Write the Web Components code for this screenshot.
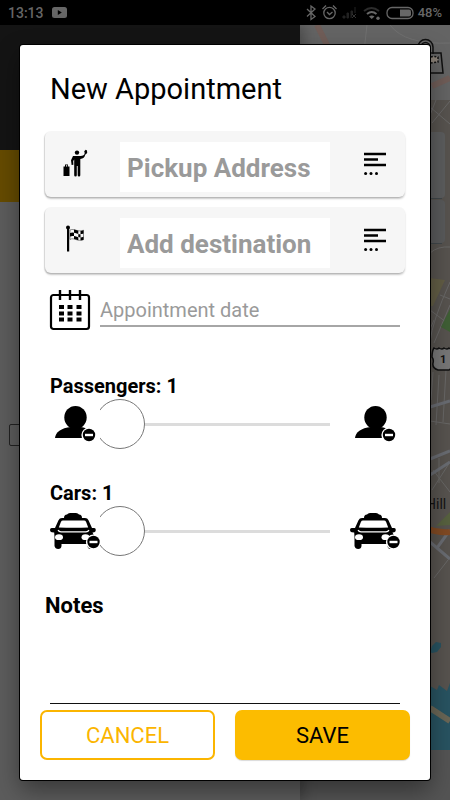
<!DOCTYPE html>
<html lang="en">
<head>
<meta charset="utf-8">
<meta name="viewport" content="width=device-width, initial-scale=1">
<title>New Appointment</title>
<style>
  html, body { margin: 0; height: 100%; }
  body { font-family: Roboto, "Liberation Sans", sans-serif; background: #545454; color: #000; }
</style>
</head>
<body>
<app-screen>
  <status-bar slot="status"></status-bar>
  <side-drawer slot="drawer"></side-drawer>
  <city-map slot="map"></city-map>
  <appointment-dialog slot="dialog" heading="New Appointment">
    <div slot="places">
      <address-card icon="hail" hint="Pickup Address"></address-card>
      <address-card icon="flag" hint="Add destination"></address-card>
    </div>
    <date-field hint="Appointment date"></date-field>
    <count-slider label="Passengers" icon="person"></count-slider>
    <count-slider label="Cars" icon="taxi"></count-slider>
    <notes-field label="Notes"></notes-field>
    <action-button slot="actions" kind="outline">CANCEL</action-button>
    <action-button slot="actions" kind="solid">SAVE</action-button>
  </appointment-dialog>
</app-screen>

<script>
const define = (name, render, setup) => customElements.define(name, class extends HTMLElement {
  constructor() { super(); this.attachShadow({ mode: 'open' }); }
  connectedCallback() {
    const t = document.createElement('template');
    t.innerHTML = render(this);
    this.shadowRoot.replaceChildren(t.content.cloneNode(true));
    if (setup) setup(this.shadowRoot, this);
  }
});

const minus = (x, y) => `<circle cx="${x}" cy="${y}" r="7.6" fill="#fff"/><circle cx="${x}" cy="${y}" r="6.2"/><path d="M${x - 4} ${y}h8" stroke="#fff" stroke-width="2.4"/>`;
const dot = (x, y) => `<rect x="${x}" y="${y}" width="5" height="4"/>`;

const icons = {
  hail: [24, 28, `<circle cx="14" cy="3.600" r="2.200"/>
    <path d="M10 7h7.500c2.500 0 4-.8 4.200-3l-.5-1.800L22.700.800 24 1.600l.2 2.400-2 1.700c-.5 2.500-2 4-4.900 4.300v16.200q0 1.300-1.300 1.300t-1.300-1.300V17h-.9v9.200q0 1.300-1.300 1.300t-1.300-1.300V10.500l-1 1.500.2 3.800-1.800.3-.6-4.900z"/>
    <path d="M.500 17.500H2v-2h3v2h1.500V27h-6zM3 17.500h1.200v-1.300H3z" fill-rule="evenodd"/>`],
  flag: [24, 28, `<circle cx="5" cy="2.500" r="2"/><rect x="4" y="3" width="2.200" height="23.500"/>
    <path d="M7 5c4-2 7 2.500 13.500.2v9.500C14 17 11 12 7 14.500z" fill="none" stroke="#444" stroke-width=".6"/>
    <path d="M11 4.600q2 .3 4.300 1.200v3.200Q13 8 11 7.700zM17.500 6q1.500 0 3-.7v3.200q-1.500.6-3 .6zM7 8q2-.8 4-.3v3.400q-2-.5-4 .3zM15.300 9q1 .3 2.200.2v3.200l-2.200-.3zM11 11.100q2 .4 4.300 1.200v3Q13 14.500 11 14zM17.500 12.400q1.500 0 3-.7v3q-1.500.6-3 .6z"/>`],
  lines: [24, 24, `<path d="M1 2h22M1 7.500h14M1 13h22" stroke="#000" stroke-width="2.600"/>
    <circle cx="2.600" cy="21.500" r="1.500"/><circle cx="8" cy="21.500" r="1.500"/><circle cx="13.500" cy="21.500" r="1.500"/>`],
  calendar: [40, 40, `<rect x="1" y="5" width="38" height="34" rx="2.500" fill="none" stroke="#000" stroke-width="2.200"/>
    <path d="M10 0v10M20 0v10M30 0v10" stroke="#000" stroke-width="2.400"/>
    ${[15, 21.5, 27.5].map(y => dot(9, y) + dot(17.5, y) + dot(26.500, y)).join('')}`],
  person: [50, 50, `<ellipse cx="25.500" cy="18.500" rx="11.200" ry="11.500"/>
    <path d="M5 39c.5-5.500 6-10 16-11h9c6 .6 11 3.500 13 8v3z"/>${minus(39, 36)}`],
  taxi: [50, 50, `<path d="M14 12q0-3 3-3.400 1-1.600 3-1.600h6q2 0 3 1.600 3 .4 3 3.400z"/>
    <path d="M12 12h23q2.500 0 3.500 2.200L42 22h2.200q1.600.2 1.600 2t-1.600 2.200l-1.700.2q1.500 2 1.500 5V40q-.5 3-3.400 3t-3.100-3v-2h-26v2q-.3 3-3.300 3T4.500 40V31l-.3-4.500-2.500-.3Q0 26 0 24t1.700-2H5l3.500-7.800Q9.500 12 12 12z"/>
    <path d="M13 14.500h21q1.500 0 2 1.200l2.200 5.800q-14 .6-29.400 0L11 15.700q.5-1.200 2-1.200z" fill="#fff"/>
    <path d="M8 24.200q1 1.600 3 1.600h25q2 0 3-1.600" fill="none" stroke="#fff" stroke-width="1.300"/>
    <ellipse cx="9" cy="31.200" rx="4" ry="2.900" fill="#fff"/><ellipse cx="35.500" cy="31.200" rx="4" ry="2.900" fill="#fff"/>${minus(43.5, 36)}`],
};

define('ui-icon', el => {
  const [w, h, body] = icons[el.getAttribute('name')];
  return `<style>:host{display:block;flex:none} svg{display:block;overflow:visible}</style>
    <svg width="${w}" height="${h}" viewBox="0 0 ${w} ${h}" aria-hidden="true">${body}</svg>`;
});

define('app-screen', () => `<style>
  :host { display: grid; grid-template: auto minmax(0, 1fr) / 2fr 1fr; min-height: 100vh; }
  slot { display: grid; min-width: 0; }
  slot[name=status] { grid-area: 1 / 1 / 2 / 3; }
  slot[name=drawer] { grid-area: 2 / 1; }
  slot[name=map] { grid-area: 2 / 2; }
  slot[name=dialog] { grid-area: 2 / 1 / 3 / 3; padding: 20px; z-index: 1; }
</style>
<slot name="status"></slot><slot name="map"></slot><slot name="drawer"></slot><slot name="dialog"></slot>`);

define('status-bar', () => `<style>
  :host { display: flex; align-items: center; justify-content: space-between; height: 25px; padding: 0 8px; background: #000; color: #676767; font-weight: 500; }
  div { display: flex; align-items: center; }
  .left { gap: 8px; font-size: 14px; }
  .right { gap: 4px; font-size: 13px; }
  svg { display: block; }
</style>
<div class="left"><span>13:13</span>
  <svg width="15" height="11" viewBox="0 0 15 11"><rect width="15" height="11" rx="2.500" fill="#676767"/><path d="M5.800 3v5l4-2.500z" fill="#000"/></svg></div>
<div class="right">
  <svg width="108" height="18" viewBox="307 4 108 18" fill="none" stroke="#676767">
    <path d="M308 9l8 7.500-4 3V6l4 3-8 7.500" stroke-width="1.300"/>
    <circle cx="330.500" cy="13" r="5.700" stroke-width="1.300"/><path d="M323.500 9l3.500-3.500M337.500 9L334 5.500M328 12l2.500 2.500 3-2.500" stroke-width="1.300"/>
    <path d="M344 18v-2h2v2zM348 18v-5h1.500v5zM352 18v-7h1.500v4M356 13V7" fill="#222" stroke="#222"/><path d="M353 14l4 4M357 14l-4 4" stroke="#333"/>
    <path d="M365 11q7.500-6 15 0" stroke="#2c2c2c" stroke-width="2"/><path d="M368 14q4.700-4 9.500 0" stroke-width="2"/><path d="M370 16.500q2.700-2 5.500 0L372.700 19z" fill="#676767" stroke="none"/><circle cx="379" cy="18.300" r="1.700" fill="#676767" stroke="none"/>
    <rect x="388" y="7.500" width="26" height="11" rx="5" stroke-width="1.300"/><path d="M401 9.500h9q2 0 2 2v3q0 2-2 2h-9z" fill="#676767" stroke="none"/>
  </svg><span>48%</span>
</div>`);

define('side-drawer', () => `<style>
  :host { display: flex; flex-direction: column; background: #5c5c5c; box-shadow: 4px 0 12px rgba(0,0,0,.25); }
  .head { height: 125px; background: #141414; }
  .band { height: 52px; background: #654b00; }
  .item { margin: 222px 0 0 9px; width: 20px; height: 20px; border: 1px solid #222; border-radius: 2px; }
</style><div class="head"></div><div class="band"></div><div class="item"></div>`);

define('city-map', () => `<style>
  :host { display: block; background: #545454; min-width: 0; overflow: hidden; }
  svg { display: block; width: 100%; height: 100%; }
</style>
<svg viewBox="300 25 150 775" preserveAspectRatio="xMaxYMin slice" aria-label="Map">
  <rect x="300" y="25" width="150" height="725" fill="#57534f"/>
  <rect x="300" y="25" width="150" height="75" fill="#646464"/>
  <path d="M317 25l14 28M432 86l18-8" stroke="#705d58" stroke-width="6"/>
  <path d="M367 25l-4 35M390 25q15 20 60 18" stroke="#707070" fill="none"/>
  <g fill="none" stroke="#101010" stroke-width="1.500"><path d="M418 47a7.500 7.500 0 0 1 15 0v7M421 47a4.500 4.500 0 0 1 9 0M430 53h11l2 20h-14"/><path d="M431 57q2-1 7 0v5l-8 1" stroke-dasharray="2 1.500" fill="#8b8278"/></g>
  <g stroke="#696867" fill="none" stroke-width="1">
    <path d="M430 107l20 17M436 100l-8 20M450 101l-18 22M430 253q8-7 20-6M450 282q-18 40-20 60M430 310l20 15M434 320l-4 9M440 295l10 4M450 305l-16 38M433 372l-2 28M439 375l-3 50M446 370l-3 52M430 421l20 3M433 470l17 22M432 490l18-28M439 458v25M448 560l-14 18"/>
  </g>
  <rect x="425" y="132" width="20" height="66" rx="4" fill="#5c5d5e"/><rect x="425" y="200" width="20" height="43" rx="4" fill="#595a5b"/>
  <path d="M430 198.500h12M430 243.500h12" stroke="#40474a"/>
  <path d="M430 278l15 2-12 26h-3z" fill="#625d45"/><path d="M450 309l-9 18 9 5z" fill="#3f5f35"/><path d="M436 526l14-14v13z" fill="#57613f"/>
  <path d="M430 407l20-6M430 459l20-8M430 475l20-13M430 542l20 17M437 548l13-18" stroke="#696c72" stroke-width="3"/>
  <path d="M428 529q10 4 22 3" stroke="#814a23" stroke-width="6" fill="none"/>
  <path d="M434 348q3 2 5 0 3 2 5 0 3 2 5 0 3 2 5 0v22q-2-2-5 0h-11q-6-2-5-7 1-3-1-6 0-6 2-9z" fill="#777" stroke="#111" stroke-width="1.500"/>
  <text x="440" y="363" font-family="Roboto" font-size="11" font-weight="700" fill="#111">1</text>
  <text x="426" y="509" font-family="Roboto" font-size="14" fill="#141414">Hill</text>
  <path d="M430 652l2-6 4-4 5 1v4l-4 5-5 1zM430 686l7 4 2-5 8 6 3-8v67h-20z" fill="#285361"/>
  <path d="M430 708l20 13" stroke="#6a6656" stroke-width="6"/>
</svg>`);

define('appointment-dialog', el => `<style>
  :host { display: block; min-width: 0; }
  form { box-sizing: border-box; min-height: 100%; display: flex; flex-direction: column; padding: 24px 20px 20px; background: #fff; border-radius: 3px; box-shadow: 0 0 0 1px #000, 0 10px 24px rgba(0,0,0,.4); }
  h1 { margin: 0 10px 22px; font-size: 29px; line-height: 40px; font-weight: 400; color: #000; }
  .body { flex: 1; display: flex; flex-direction: column; padding: 0 10px; }
  .body slot { display: contents; }
  slot[name=places] { display: block; margin: 0 5px 17px 5px; }
  slot[name=actions] { display: grid; grid-template-columns: 1fr 1fr; gap: 20px; margin-top: 6px; }
</style>
<form role="dialog" aria-labelledby="t"><h1 id="t">${el.getAttribute('heading')}</h1>
<slot name="places"></slot>
<div class="body"><slot></slot></div><slot name="actions"></slot></form>`);

define('address-card', el => `<style>
  :host { display: flex; align-items: center; height: 66px; margin-bottom: 10px; background: #f6f6f6; border-radius: 6px; box-shadow: 0 2px 2px rgba(0,0,0,.2), -1px 1px 1px rgba(0,0,0,.12); }
  :host(:last-of-type) { margin-bottom: 0; }
  ui-icon.lead { margin: 0 0 2px 18px; }
  label { flex: 1; min-width: 0; margin: 6px 33px 0; display: flex; }
  input { width: 100%; height: 50px; box-sizing: border-box; border: 0; outline: 0; padding: 2px 7px 0; background: #fff; font: 700 26px/30px Roboto, sans-serif; color: #000; }
  input::placeholder { color: #9a9a9a; opacity: 1; }
  button { border: 0; padding: 0; margin: 0 18px 0 0; background: none; }
</style>
<ui-icon class="lead" name="${el.getAttribute('icon')}"></ui-icon>
<label><input type="text" aria-label="${el.getAttribute('hint')}" placeholder="${el.getAttribute('hint')}"></label>
<button type="button" aria-label="Choose from list"><ui-icon name="lines"></ui-icon></button>`);

define('date-field', el => `<style>
  :host { display: flex; gap: 10px; height: 40px; }
  input { flex: 1; min-width: 0; height: 37px; box-sizing: border-box; border: 0; border-bottom: 2px solid #a6a6a6; outline: 0; padding: 4px 0 0; background: none; font: 400 20px/24px Roboto, sans-serif; }
  input::placeholder { color: #9a9a9a; opacity: 1; }
</style>
<ui-icon name="calendar"></ui-icon><input type="text" aria-label="${el.getAttribute('hint')}" placeholder="${el.getAttribute('hint')}">`);

define('count-slider', el => {
  const label = el.getAttribute('label'), icon = el.getAttribute('icon');
  return `<style>
  :host { display: block; margin-top: 44px; }
  :host(:nth-of-type(n+2)) { margin-top: 32px; }
  label { display: block; font-size: 20px; line-height: 24px; font-weight: 700; }
  .row { display: flex; align-items: center; margin-top: 1px; }
  .track { flex: 1; min-width: 0; overflow: hidden; margin-right: 20px; }
  input { -webkit-appearance: none; appearance: none; display: block; box-sizing: border-box; width: calc(100% + 5px); height: 50px; margin: 0 0 0 -5px; background: linear-gradient(#dcdcdc, #dcdcdc) center / 100% 3px no-repeat; outline: 0; }
  input::-webkit-slider-thumb { -webkit-appearance: none; box-sizing: border-box; width: 50px; height: 50px; border: 1px solid #777; border-radius: 50%; background: #fff; }
</style>
<label for="n">${label}: <span>1</span></label>
<div class="row"><ui-icon name="${icon}"></ui-icon>
<div class="track"><input id="n" type="range" min="1" max="8" value="1"></div>
<ui-icon name="${icon}"></ui-icon></div>`;
}, root => {
  const input = root.querySelector('input'), out = root.querySelector('span');
  input.addEventListener('input', () => { out.textContent = input.value; });
});

define('notes-field', el => `<style>
  :host { flex: 1; display: flex; flex-direction: column; margin-top: 38px; }
  label { margin-left: -5px; font-size: 22px; line-height: 24px; font-weight: 700; }
  textarea { flex: 1; min-height: 40px; box-sizing: border-box; width: 100%; resize: none; border: 0; border-bottom: 1px solid #111; outline: 0; padding: 8px 0; background: none; font: 400 20px/24px Roboto, sans-serif; }
</style><label for="x">${el.getAttribute('label')}</label><textarea id="x"></textarea>`);

define('action-button', () => `<style>
  :host { display: grid; }
  button { height: 50px; border: 2px solid #fbb500; border-radius: 7px; background: #fff; color: #fbb500; font: 400 22px/26px Roboto, sans-serif; padding: 2px 0 0; }
  :host([kind=solid]) button { background: #fcbc00; border-color: #fcbc00; color: #000; box-shadow: 0 1px 1px rgba(0,0,0,.15); }
</style><button type="button"><slot></slot></button>`);
</script>
</body>
</html>
